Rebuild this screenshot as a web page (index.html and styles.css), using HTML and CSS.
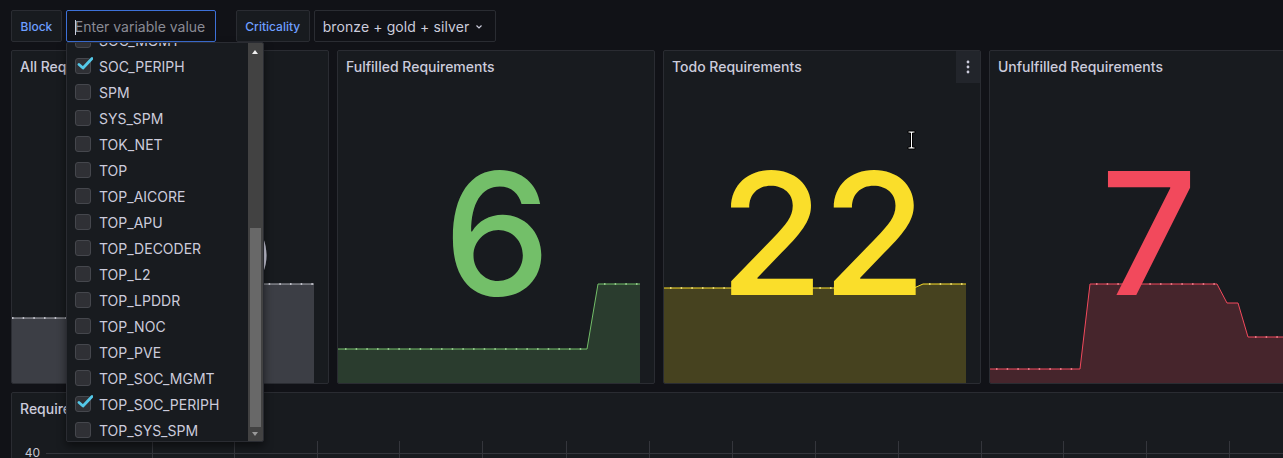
FILE: index.html
```html
<!DOCTYPE html>
<html lang="en">
<head>
<meta charset="utf-8">
<title>Requirements dashboard</title>
<link rel="stylesheet" href="styles.css">
</head>
<body>
<div class="page">
  <div class="vars">
    <div class="var">
      <span class="var-label">Block</span>
      <div class="var-input"><span class="caret"></span><span class="placeholder">Enter variable value</span></div>
    </div>
    <div class="var">
      <span class="var-label">Criticality</span>
      <div class="var-select"><span>bronze + gold + silver</span><svg class="chev" width="6" height="4" viewBox="0 0 6 4"><polyline points="0.5,0.5 3,3 5.5,0.5" fill="none" stroke="#ccccdc" stroke-width="1.2"/></svg></div>
    </div>
  </div>

  <div class="stats">
    <section class="panel stat">
      <header class="panel-title">All Requirements</header>
      <div class="stat-value v-all">35</div>
      <svg class="spark" viewBox="0 0 303 100" width="303" height="100">
        <polygon points="0,100 0,35 236,35 246,1 302,1 302,100" fill="#3c3e45"/>
        <polyline points="0,35 236,35 246,1 302,1" fill="none" stroke="#a9abb3" stroke-width="1"/>
        <polyline class="dots" points="0,35 236,35" stroke="#dcdce6"/>
        <polyline class="dots" points="246,1 302,1" stroke="#dcdce6"/>
      </svg>
    </section>
    <section class="panel stat">
      <header class="panel-title">Fulfilled Requirements</header>
      <div class="stat-value v-green">6</div>
      <svg class="spark" viewBox="0 0 303 100" width="303" height="100">
        <polygon points="0,100 0,66 249,66 260,1 302,1 302,100" fill="#2a3c2e"/>
        <polyline points="0,66 249,66 260,1 302,1" fill="none" stroke="#73bf69" stroke-width="1"/>
        <polyline class="dots" points="7,66 249,66" stroke="#a6e09e"/>
        <polyline class="dots" points="266,1 302,1" stroke="#a6e09e"/>
      </svg>
    </section>
    <section class="panel stat">
      <header class="panel-title">Todo Requirements</header>
      <button class="panel-menu" type="button" aria-label="Menu"><svg width="4" height="14" viewBox="0 0 4 14"><circle cx="2" cy="2" r="1.4" fill="#ccccdc"/><circle cx="2" cy="7" r="1.4" fill="#ccccdc"/><circle cx="2" cy="12" r="1.4" fill="#ccccdc"/></svg></button>
      <div class="stat-value v-yellow">22</div>
      <svg class="spark" viewBox="0 0 303 100" width="303" height="100">
        <polygon points="0,100 0,5 250,5 259,1 302,1 302,100" fill="#46421f"/>
        <polyline points="0,5 250,5 259,1 302,1" fill="none" stroke="#fade2a" stroke-width="1"/>
        <polyline class="dots" points="6,5 250,5" stroke="#fff08a"/>
        <polyline class="dots" points="265,1 302,1" stroke="#fff08a"/>
      </svg>
      <svg class="ibeam" width="9" height="20" viewBox="0 0 9 20"><path d="M1,1 H8 V3 H5.5 V17 H8 V19 H1 V17 H3.5 V3 H1 Z" fill="#fff" stroke="#000" stroke-width="1"/></svg>
    </section>
    <section class="panel stat">
      <header class="panel-title">Unfulfilled Requirements</header>
      <div class="stat-value v-red">7</div>
      <svg class="spark" viewBox="0 0 303 100" width="303" height="100">
        <polygon points="0,100 0,86 90,86 100,1 227,1 237,20 248,20 258,54 303,54 303,100" fill="#46252c"/>
        <polyline points="0,86 90,86 100,1 227,1 237,20 248,20 258,54 303,54" fill="none" stroke="#f2495c" stroke-width="1"/>
        <polyline class="dots" points="6,86 90,86" stroke="#ff8a97"/>
        <polyline class="dots" points="106,1 227,1" stroke="#ff8a97"/>
        <polyline class="dots" points="265,54 303,54" stroke="#ff8a97"/>
      </svg>
    </section>
  </div>

  <section class="panel ts">
    <header class="panel-title">Requirements over time</header>
    <div class="ts-plot">
      <div class="axis"><span>40</span></div>
      <svg class="grid" width="1260" height="60" viewBox="0 0 1260 60">
        <g stroke="#34363c" stroke-width="1">
          <line x1="0" y1="12.5" x2="1260" y2="12.5"/>
          <line x1="106.5" y1="0" x2="106.5" y2="60"/>
          <line x1="188.5" y1="0" x2="188.5" y2="60"/>
          <line x1="271.5" y1="0" x2="271.5" y2="60"/>
          <line x1="353.5" y1="0" x2="353.5" y2="60"/>
          <line x1="436.5" y1="0" x2="436.5" y2="60"/>
          <line x1="520.5" y1="0" x2="520.5" y2="60"/>
          <line x1="603.5" y1="0" x2="603.5" y2="60"/>
          <line x1="686.5" y1="0" x2="686.5" y2="60"/>
          <line x1="769.5" y1="0" x2="769.5" y2="60"/>
          <line x1="852.5" y1="0" x2="852.5" y2="60"/>
          <line x1="935.5" y1="0" x2="935.5" y2="60"/>
          <line x1="1017.5" y1="0" x2="1017.5" y2="60"/>
          <line x1="1100.5" y1="0" x2="1100.5" y2="60"/>
          <line x1="1183.5" y1="0" x2="1183.5" y2="60"/>
        </g>
      </svg>
    </div>
  </section>

  <div class="dropdown">
    <div class="options">
      <div class="options-inner">
        <div class="option"><span class="cb"></span>SOC_MGMT</div>
        <div class="option"><span class="cb checked"><svg width="16" height="14" viewBox="0 0 16 14"><polyline points="2,7.5 6,11 15,1.5" fill="none" stroke="#54c8e8" stroke-width="2.8" stroke-linecap="round" stroke-linejoin="round"/></svg></span>SOC_PERIPH</div>
        <div class="option"><span class="cb"></span>SPM</div>
        <div class="option"><span class="cb"></span>SYS_SPM</div>
        <div class="option"><span class="cb"></span>TOK_NET</div>
        <div class="option"><span class="cb"></span>TOP</div>
        <div class="option"><span class="cb"></span>TOP_AICORE</div>
        <div class="option"><span class="cb"></span>TOP_APU</div>
        <div class="option"><span class="cb"></span>TOP_DECODER</div>
        <div class="option"><span class="cb"></span>TOP_L2</div>
        <div class="option"><span class="cb"></span>TOP_LPDDR</div>
        <div class="option"><span class="cb"></span>TOP_NOC</div>
        <div class="option"><span class="cb"></span>TOP_PVE</div>
        <div class="option"><span class="cb"></span>TOP_SOC_MGMT</div>
        <div class="option"><span class="cb checked"><svg width="16" height="14" viewBox="0 0 16 14"><polyline points="2,7.5 6,11 15,1.5" fill="none" stroke="#54c8e8" stroke-width="2.8" stroke-linecap="round" stroke-linejoin="round"/></svg></span>TOP_SOC_PERIPH</div>
        <div class="option"><span class="cb"></span>TOP_SYS_SPM</div>
      </div>
    </div>
    <div class="scrollbar">
      <span class="arrow-up"></span>
      <span class="thumb"></span>
      <span class="arrow-down"></span>
    </div>
  </div>
</div>
</body>
</html>
```
FILE: styles.css
```css
* { box-sizing: border-box; }

html, body {
  margin: 0;
  background: #111217;
  overflow: hidden;
}

body {
  width: 1283px;
  height: 458px;
  font-family: Inter, "Noto Sans", sans-serif;
  color: #ccccdc;
}

.page {
  position: relative;
  width: 1307px;
  padding: 10px 0 0 11px;
}

/* variables bar */
.vars {
  display: flex;
  gap: 20px;
  height: 32px;
}

.var {
  display: flex;
  gap: 4px;
}

.var-label {
  display: flex;
  align-items: center;
  height: 32px;
  padding: 0 8.5px;
  background: #181b1f;
  border: 1px solid #2a2c32;
  border-radius: 2px;
  color: #6e9fff;
  font-size: 12px;
  font-weight: 500;
}

.var-input {
  position: relative;
  display: flex;
  align-items: center;
  width: 150px;
  height: 32px;
  padding: 0 8px;
  background: #111217;
  border: 1px solid #3d71d9;
  border-radius: 2px;
  font-size: 14px;
}

.placeholder { color: #8a8b94; }

.caret {
  position: absolute;
  left: 8px;
  top: 9px;
  width: 1px;
  height: 15px;
  background: #ccccdc;
}

.var-select {
  display: flex;
  align-items: center;
  width: 182px;
  height: 32px;
  padding: 0 13px 0 8px;
  background: #111217;
  border: 1px solid #2a2c32;
  border-radius: 2px;
  font-size: 14px;
  color: #ccccdc;
  letter-spacing: 0.1px;
}

.chev {
  margin-left: auto;
  margin-top: 1px;
}

/* panels */
.stats {
  display: grid;
  grid-template-columns: repeat(4, 318px);
  gap: 8px;
  margin-top: 8px;
}

.panel {
  position: relative;
  overflow: hidden;
  background: #181b1f;
  border: 1px solid #2a2c32;
  border-radius: 2px;
}

.panel-title {
  height: 32px;
  padding: 0 8px;
  line-height: 32px;
  font-size: 14px;
  font-weight: 500;
  color: #ccccdc;
  white-space: nowrap;
}

.stat {
  display: flex;
  flex-direction: column;
  height: 334px;
}

.stat-value {
  position: relative;
  z-index: 1;
  flex: 1;
  display: flex;
  align-items: center;
  justify-content: center;
  font-size: 170px;
  font-weight: 500;
  line-height: 1;
  letter-spacing: -2px;
}

.v-all { color: #ccccdc; }
.v-green { color: #73bf69; }
.v-yellow { color: #fade2a; }
.v-red { color: #f2495c; }

.spark {
  position: absolute;
  left: 0;
  bottom: 0;
  z-index: 0;
}

.dots {
  fill: none;
  stroke-width: 1.5;
  stroke-dasharray: 1.5 9.17;
}

.panel-menu {
  position: absolute;
  top: 0;
  right: 0;
  z-index: 2;
  width: 24px;
  height: 32px;
  padding: 0;
  border: 0;
  background: #22252b;
  display: flex;
  align-items: center;
  justify-content: center;
}

.ibeam {
  position: absolute;
  left: 243px;
  top: 79px;
  z-index: 3;
}

/* time series */
.ts {
  height: 120px;
  margin-top: 8px;
}

.ts-plot {
  display: flex;
  margin-top: 16px;
  height: 60px;
}

.axis {
  width: 34px;
  padding: 5px 6px 0 0;
  text-align: right;
  font-size: 12px;
  line-height: 14px;
  color: #c6c6d0;
}

.grid { display: block; }

/* dropdown */
.dropdown {
  position: absolute;
  left: 66px;
  top: 42px;
  z-index: 10;
  display: flex;
  width: 198px;
  height: 400px;
  background: #181b1f;
  border: 1px solid #2a2c32;
  border-radius: 2px;
  box-shadow: 0 4px 8px rgba(0, 0, 0, 0.5);
  overflow: hidden;
}

.options {
  flex: 1;
  overflow: hidden;
}

.options-inner { margin-top: -16px; }

.option {
  display: flex;
  align-items: center;
  gap: 8px;
  height: 26px;
  padding-left: 8px;
  font-size: 14px;
  color: #ccccdc;
  white-space: nowrap;
}

.cb {
  position: relative;
  flex: none;
  width: 16px;
  height: 16px;
  background: #2f3035;
  border: 1px solid #45474d;
  border-radius: 3px;
}

.cb svg {
  position: absolute;
  left: 1px;
  top: -2px;
}

.scrollbar {
  position: relative;
  flex: none;
  width: 15px;
  background: #424242;
}

.thumb {
  position: absolute;
  left: 2px;
  top: 185px;
  width: 11px;
  height: 199px;
  background: #686868;
}

.arrow-up {
  position: absolute;
  left: 4px;
  top: 7px;
  width: 0;
  height: 0;
  border-left: 3.5px solid transparent;
  border-right: 3.5px solid transparent;
  border-bottom: 4px solid #f0f0f0;
}

.arrow-down {
  position: absolute;
  left: 4px;
  bottom: 5px;
  width: 0;
  height: 0;
  border-left: 3.5px solid transparent;
  border-right: 3.5px solid transparent;
  border-top: 4px solid #9a9a9a;
}
```
